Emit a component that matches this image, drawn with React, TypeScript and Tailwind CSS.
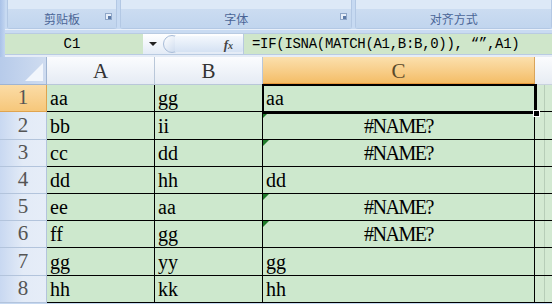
import React from "react";

type Row = { a: string; b: string; c: string; err?: boolean; h: string };

const rows: Row[] = [
  { a: "aa", b: "gg", c: "aa", h: "h-[27px]" },
  { a: "bb", b: "ii", c: "#NAME?", err: true, h: "h-[28px]" },
  { a: "cc", b: "dd", c: "#NAME?", err: true, h: "h-[27px]" },
  { a: "dd", b: "hh", c: "dd", h: "h-[27px]" },
  { a: "ee", b: "aa", c: "#NAME?", err: true, h: "h-[27px]" },
  { a: "ff", b: "gg", c: "#NAME?", err: true, h: "h-[27px]" },
  { a: "gg", b: "yy", c: "gg", h: "h-[28px]" },
  { a: "hh", b: "kk", c: "hh", h: "h-[27px]" },
];

const serif = { fontFamily: '"Liberation Serif", "Noto Sans CJK SC", serif' };
const cjk = { fontFamily: '"Noto Sans CJK SC", "Noto Sans", sans-serif' };
const mono = { fontFamily: '"Liberation Mono", "Noto Sans CJK SC", monospace' };

function Launcher() {
  return (
    <span className="relative block h-[7px] w-[7px] border border-[#8ea6c8] bg-[#e6eef9]">
      <span className="absolute bottom-0 right-0 h-[3px] w-[3px] bg-[#5d7aa6]" />
    </span>
  );
}

function Group({ label, w, launcher }: { label: string; w: string; launcher?: boolean }) {
  return (
    <div className={`${w} flex h-full flex-col rounded-b-[3px] border-x border-b border-[#b3c8e4] bg-[#d3e2f4]`}>
      <div className="h-[9px] bg-[#dde9f7]" />
      <div className="relative flex flex-1 items-center justify-center bg-gradient-to-b from-[#cbdcf1] to-[#c1d5ee]">
        <span className="text-[12px] leading-none text-[#4a6596]" style={cjk}>
          {label}
        </span>
        {launcher && (
          <span className="absolute right-[4px] top-[4px] flex">
            <Launcher />
          </span>
        )}
      </div>
    </div>
  );
}

export default function App() {
  return (
    <div className="relative h-[304px] w-[552px] overflow-hidden bg-[#c5d8f1]">
      {/* ribbon */}
      <div className="flex h-[29px] gap-[3px] bg-[#c7daf2] pl-[7px]">
        <div className="absolute left-0 top-0 h-[57px] w-[5px] bg-gradient-to-r from-[#a9c2e8] to-[#c2d5f0]" />
        <Group label="剪贴板" w="w-[112px]" launcher />
        <Group label="字体" w="w-[236px]" launcher />
        <Group label="对齐方式" w="w-[200px]" />
      </div>
      <div className="h-[4px] border-t border-[#e9f0fa] bg-[#c9dbf2]" />

      {/* formula bar */}
      <div className="ml-[5px] flex h-[22px] items-center border-y border-[#b9cbe2] bg-[#cfe6ca]">
        <div className="flex w-[138px] items-center justify-center pr-[4px] text-[14px] text-black" style={mono}>
          C1
        </div>
        <div className="flex h-full w-[100px] items-center bg-gradient-to-b from-[#ffffff] to-[#e3ebf6]">
          <span className="ml-[6px] h-0 w-0 border-x-[4px] border-t-[4px] border-x-transparent border-t-[#222]" />
          <span className="ml-[6px] h-[18px] w-[18px] rounded-full border border-[#a8bcd8] bg-gradient-to-br from-white to-[#c6d6ec]" />
          <div className="ml-[-6px] flex h-[16px] flex-1 items-center justify-end rounded-r-[2px] bg-gradient-to-b from-[#f4f8fd] to-[#d5e2f3] pr-[10px]">
            <span className="text-[13px] font-bold italic leading-none text-[#444]" style={serif}>
              f<span className="text-[10px]">x</span>
            </span>
          </div>
        </div>
        <div className="h-full w-px bg-[#b8c9df]" />
        <div className="pl-[8px] text-[14px] tracking-[-0.3px] text-black" style={mono}>
          =IF(ISNA(MATCH(A1,B:B,0)), “”,A1)
        </div>
      </div>
      <div className="h-[2px] bg-[#e6edf7]" />

      {/* grid */}
      <div className="relative">
        <div className="grid grid-cols-[47px_108px_108px_272px_1fr]">
          {/* header row */}
          <div className="relative h-[28px] overflow-hidden border-b border-r border-[#9fb4d2] bg-gradient-to-r from-[#b7cbea] to-[#cfdcf0]">
            <span className="absolute bottom-[3px] right-[3px] h-0 w-0 border-b-[18px] border-l-[18px] border-b-[#f2f6fc] border-l-transparent" />
          </div>
          {["A", "B"].map((c) => (
            <div
              key={c}
              className="flex h-[28px] items-center justify-center border-b border-r border-[#b9c7d9] bg-gradient-to-b from-[#fbfcfe] to-[#e5ebf4] pt-[3px] text-[21px] text-[#333]"
              style={serif}
            >
              {c}
            </div>
          ))}
          <div
            className="flex h-[28px] items-center justify-center border-b-2 border-r border-b-[#e89a3c] border-r-[#d9a45a] bg-gradient-to-b from-[#fbe0ad] to-[#f4bd66] pt-[3px] text-[21px] text-[#5a4a2a]"
            style={serif}
          >
            C
          </div>
          <div className="h-[28px] border-b border-[#c9d3df] bg-gradient-to-b from-[#fbfcfe] to-[#e7ecf3]" />

          {rows.map((r, i) => (
            <React.Fragment key={i}>
              <div
                className={`${r.h} flex items-end justify-center pb-[1px] text-[21px] leading-[25px] text-[#555] border-b border-r ${
                  i === 0
                    ? "border-[#e0a44f] bg-gradient-to-b from-[#fbdca6] to-[#f6c77a]"
                    : "border-[#b3c4dc] bg-gradient-to-r from-[#c8d8f1] via-[#e3ebf7] to-[#e6edf8]"
                }`}
                style={serif}
              >
                {i + 1}
              </div>
              <div className={`${r.h} flex items-end border-b border-r border-black bg-[#cde8cd] pb-[1px] pl-[3px] text-[20px] leading-[24px] text-black`} style={serif}>
                {r.a}
              </div>
              <div className={`${r.h} flex items-end border-b border-r border-black bg-[#cde8cd] pb-[1px] pl-[3px] text-[20px] leading-[24px] text-black`} style={serif}>
                {r.b}
              </div>
              <div
                className={`${r.h} relative flex items-end border-b border-r border-black bg-[#cde8cd] pb-[1px] text-[20px] leading-[24px] text-black ${
                  r.err ? "justify-center tracking-[-1.5px]" : "pl-[3px]"
                }`}
                style={serif}
              >
                {r.err && (
                  <span className="absolute left-0 top-0 h-0 w-0 border-r-[6px] border-t-[6px] border-r-transparent border-t-[#1f7a2a]" />
                )}
                {r.c}
              </div>
              <div className={`${r.h} border-b border-black bg-[#d3e9d2]`}>
                <div className="ml-[9px] h-full w-px bg-[#b7cdb8]" />
              </div>
            </React.Fragment>
          ))}
        </div>

        {/* active cell C1 */}
        <div className="pointer-events-none absolute left-[262px] top-[27px] h-[30px] w-[275px] border-2 border-black">
          <span className="absolute bottom-[-5px] right-[-5px] h-[7px] w-[7px] border border-white bg-black" />
        </div>
      </div>
    </div>
  );
}
